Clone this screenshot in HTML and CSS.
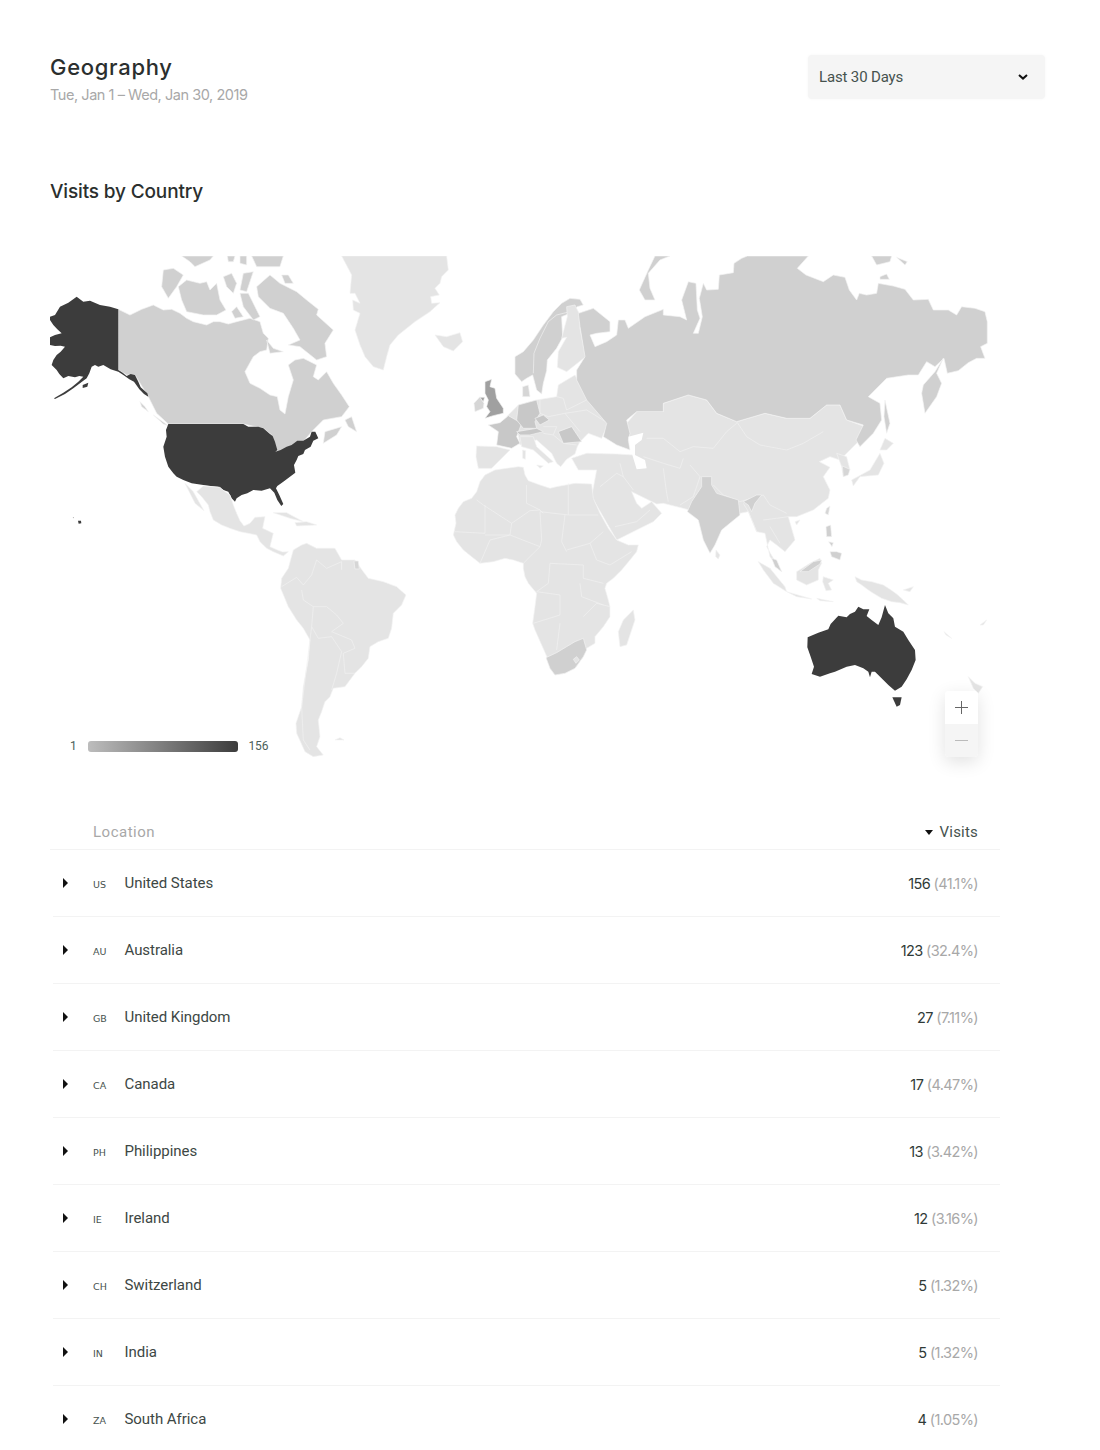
FILE: index.html
```html
<!DOCTYPE html>
<html lang="en">
<head>
    <meta charset="UTF-8">
    <meta name="viewport" content="width=device-width, initial-scale=1.0">
    <title>Geography</title>
    <link rel="stylesheet" href="styles.css">
</head>
<body>

<div class="page">
    <div class="page-head">
        <div>
            <h1>Geography</h1>
            <p class="date-range">Tue, Jan 1 – Wed, Jan 30, 2019</p>
        </div>
        <div class="range-select">
            <span>Last 30 Days</span>
            <svg class="chevron" width="10" height="6" viewBox="0 0 10 6"><path d="M1 1l4 3.6L9 1"/></svg>
        </div>
    </div>

    <h2>Visits by Country</h2>

    <div class="map">
        <svg class="world" width="950" height="504" viewBox="50 256 950 504">
            <!-- north america -->
            <g transform="translate(40 250) scale(.3333)">
                <polygon class="ca" points="235,178 270,195 305,178 340,165 370,180 395,178 420,190 440,205 460,215 500,225 520,215 540,215 565,222 590,215 630,205 660,215 670,250 685,265 680,300 660,305 640,320 615,365 630,400 660,415 690,435 712,440 720,480 735,492 745,440 760,390 745,345 765,330 790,325 830,345 820,380 835,390 860,365 880,400 905,435 928,470 905,500 850,510 815,545 790,575 740,600 705,605 695,555 670,535 610,522 385,522 350,490 325,440 285,375 260,375 235,360"/>
                <polygon class="ca" points="650,110 690,75 720,100 770,125 800,150 835,178 830,195 880,240 855,280 860,320 830,330 780,290 745,285 780,270 760,235 730,190 690,175 655,140"/>
                <polygon class="ca" points="370,60 400,55 430,75 410,110 385,145 365,110"/>
                <polygon class="ca" points="415,110 440,90 480,100 500,95 510,120 530,100 540,150 558,180 530,195 490,195 440,185 425,150"/>
                <polygon class="ca" points="425,18 520,18 510,30 465,50 450,35"/>
                <polygon class="ca" points="562,18 585,18 580,35 565,35"/>
                <polygon class="ca" points="600,18 620,18 620,45 600,40"/>
                <polygon class="ca" points="635,18 730,18 720,50 650,50"/>
                <polygon class="ca" points="550,80 575,70 590,100 580,130 560,110"/>
                <polygon class="ca" points="610,70 640,65 620,125 600,120"/>
                <polygon class="ca" points="725,75 745,75 760,100 735,100"/>
                <polygon class="ca" points="600,130 625,130 660,200 640,210 610,170"/>
                <polygon class="ca" points="575,185 590,170 610,200 585,205"/>
                <polygon class="ca" points="680,270 700,295 730,305 690,310"/>
                <polygon class="ca" points="855,545 905,530 890,555 850,580"/>
                <polygon class="ca" points="915,510 935,500 950,545 925,530"/>
                <polygon class="ca" points="340,495 385,527 370,522"/>
                <polygon class="ca" points="300,455 315,470 325,485 305,470"/>
                <polygon class="dark" points="30,200 45,195 60,170 85,158 110,140 130,155 150,152 180,165 210,170 235,178 235,360 248,368 260,378 272,372 285,375 295,395 302,412 322,430 325,440 312,432 298,418 282,395 268,388 250,375 235,365 212,358 190,345 175,350 165,345 155,350 148,370 140,385 120,400 100,415 75,432 45,447 42,445 70,428 95,412 115,395 130,380 118,378 105,382 85,378 70,385 58,372 50,360 35,345 40,330 50,315 62,305 75,290 62,287 45,288 30,285 30,262 45,255 65,250 52,238 40,225 30,210"/>
                <polygon class="dark" points="128,405 145,398 142,410 128,414"/>
                <polygon class="dark" points="385,522 610,522 625,530 655,530 670,535 690,552 698,558 705,575 712,600 706,605 722,600 740,590 755,585 772,572 790,572 810,560 815,545 826,545 835,565 820,572 812,590 795,600 790,612 775,618 770,630 762,645 766,668 750,680 730,695 712,708 708,715 718,735 730,762 724,768 712,750 703,728 690,715 665,722 640,720 622,730 605,735 590,745 585,755 575,745 565,725 550,720 535,710 512,708 490,705 455,700 430,690 410,680 400,670 385,650 375,620 370,590 380,560 378,540"/>
                <polygon class="dark" points="114,812 123,812 124,820 116,821"/>
                <polygon class="dark" points="98,802 102,803 101,805"/>
            </g>

            <!-- south and central america -->
            <g transform="translate(40 500) scale(.3333)">
                <polygon class="light" points="490,-42 515,-40 540,-38 555,-25 570,-15 580,15 590,40 600,62 612,78 630,70 645,52 675,50 668,85 700,100 695,120 690,140 712,150 728,156 745,155 730,168 700,155 680,145 660,125 650,105 625,100 600,95 570,85 545,75 520,60 510,35 505,15 485,-10 470,-25"/>
                <polygon class="light" points="435,-50 460,-25 492,32 465,10 445,-30"/>
                <polygon class="light" points="700,38 740,38 790,65 750,55"/>
                <polygon class="light" points="765,68 800,65 830,75 770,78"/>
                <polygon class="light" points="725,235 745,205 760,150 785,135 800,130 830,145 885,145 905,180 945,180 970,215 985,235 1030,245 1070,260 1098,285 1085,315 1060,340 1055,385 1045,415 1015,425 990,440 985,475 965,500 945,520 915,560 880,565 870,590 855,605 845,635 835,660 840,710 830,740 850,765 820,770 795,755 770,700 768,670 785,620 790,560 805,480 810,420 790,385 770,360 745,320 722,265"/>
                <polygon class="tint" points="942,183 955,183 958,207 945,207"/>
                <polygon class="light" points="885,720 900,713 912,720"/>
                <polyline class="line" points="725,260 770,232 790,255 815,225 830,180 860,205 905,185 905,210"/>
                <polyline class="line" points="785,270 790,300 820,320 860,320 890,345 910,370 875,395 935,420 945,445 910,460 915,520 945,520"/>
                <polyline class="line" points="820,320 815,380 835,415 875,410 905,455 890,520 875,570"/>
                <polyline class="line" points="815,380 800,500 785,620 790,720 810,750"/>
            </g>

            <!-- greenland, europe -->
            <g transform="translate(340 250) scale(.3333)">
                <polygon class="light" points="5,18 320,18 325,60 305,80 300,100 285,115 298,135 272,140 275,160 300,158 270,185 225,215 175,255 150,285 140,320 130,360 100,350 75,320 60,285 45,240 60,190 40,180 38,150 60,160 45,130 30,130 35,75"/>
                <polygon class="light" points="285,255 320,260 360,248 368,275 340,303 310,290"/>
                <polygon class="ca" points="925,60 945,18 990,18 960,30 925,70 930,115 945,150 915,150 898,120"/>
                <polygon class="light" points="500,500 535,465 590,450 650,440 655,405 705,375 745,450 805,520 785,565 745,550 720,575 712,590 705,612 680,628 662,650 650,640 635,610 590,570 540,585 535,555"/>
                <polygon class="ca" points="525,320 550,305 580,270 610,225 640,185 665,160 690,145 720,148 730,165 712,170 690,190 665,200 668,262 650,295 622,330 620,362 610,400 605,432 590,420 578,375 560,385 545,395 525,372"/>
                <polyline class="line" points="580,370 582,310 600,265 625,215 650,195 690,185"/>
                <polygon class="light" points="665,265 682,200 680,170 705,165 720,195 720,235 737,320 680,365 652,352 655,305 680,262"/>
                <polygon class="tint" points="548,410 565,405 570,440 548,440"/>
                <polyline class="line" points="650,440 670,445 680,480 740,450"/>
                <polyline class="line" points="600,450 600,490 625,500 675,490 720,545"/>
                <polyline class="line" points="675,490 740,480 805,520"/>
                <polyline class="line" points="610,530 650,530 640,555 610,550"/>
                <polyline class="line" points="640,555 670,580 710,585"/>
                <polygon class="light" points="540,560 580,560 590,590 640,635 625,640 580,600 545,590"/>
                <polygon class="light" points="410,588 470,590 510,600 480,630 455,655 415,655 408,620"/>
                <polygon class="light" points="590,645 610,648 600,655"/>
                <polygon class="light" points="548,600 557,602 556,628 548,625"/>
                <polygon class="mid" points="445,525 480,518 505,497 545,520 530,560 540,580 515,595 470,585 475,545"/>
                <polygon class="mid" points="535,465 590,450 600,490 585,515 590,535 550,535 530,510"/>
                <polygon class="mid" points="585,505 610,495 628,510 600,525"/>
                <polygon class="mid" points="530,545 590,535 610,545 570,555 540,555"/>
                <polygon class="mid" points="655,545 695,530 725,575 670,580"/>
                <polygon class="tint" points="402,460 420,440 432,460 430,475 405,485"/>
                <polygon class="uk" points="435,395 455,388 450,410 465,415 470,445 490,475 490,490 460,497 435,505 450,485 440,470 445,450 435,430"/>
                <polygon class="uk" points="420,442 434,442 430,456"/>
            </g>

            <!-- asia -->
            <g transform="translate(600 380) scale(.3333)">
                <polygon class="light" points="80,130 110,95 190,95 190,70 265,45 320,60 350,100 410,125 495,100 560,115 630,115 680,75 720,75 740,120 795,140 780,180 750,210 720,240 690,230 658,245 690,262 670,290 690,330 685,355 640,390 590,410 565,410 585,480 555,515 530,495 510,480 500,500 520,535 545,575 510,530 495,460 470,455 445,395 420,400 300,400 250,385 190,370 170,372 95,335 110,370 125,385 155,365 185,400 160,425 120,445 50,480 -25,350 -10,270 -20,270 -65,270 -85,235 -40,220 50,222 100,225 85,170"/>
                <polyline class="line" points="410,125 440,170 480,195 560,210 610,190 670,155"/>
                <polyline class="line" points="140,175 190,175 240,215 280,200 340,205 380,155 410,130"/>
                <polyline class="line" points="130,230 190,250 240,265 250,235"/>
                <polyline class="line" points="190,265 200,340 205,365"/>
                <polyline class="line" points="270,255 300,290 280,350 240,375"/>
                <polyline class="line" points="60,250 70,290 100,330"/>
                <polyline class="line" points="0,320 50,280 70,290"/>
                <polyline class="line" points="45,440 110,425 150,390"/>
                <polyline class="line" points="430,370 445,395 470,455"/>
                <polyline class="line" points="490,420 530,415 565,410"/>
                <polyline class="line" points="510,440 540,490"/>
                <polyline class="line" points="340,315 370,345 420,365 490,345 510,375 560,400"/>
                <polygon class="ca" points="190,-212 190,-195 240,-190 260,-180 245,-240 265,-295 288,-290 292,-210 300,-185 280,-140 295,-140 307,-190 298,-245 310,-290 320,-270 355,-272 358,-315 400,-322 402,-350 425,-365 442,-372 625,-372 592,-335 618,-315 670,-295 700,-315 735,-308 748,-270 770,-240 778,-260 800,-255 830,-260 835,-290 880,-282 915,-272 940,-240 985,-242 1000,-210 1045,-210 1070,-195 1085,-220 1125,-215 1155,-205 1162,-175 1162,-110 1142,-100 1155,-65 1130,-65 1105,-52 1075,-28 1042,-20 1032,-65 1005,-40 980,-55 955,-15 925,-15 860,-5 805,50 840,70 845,120 820,160 780,200 768,180 790,135 740,120 720,75 680,75 630,115 560,115 495,100 410,125 350,100 320,60 265,45 190,70 190,95 110,95 80,120 90,160 85,180 90,210 50,195 10,170 20,130 -40,60 -70,0 -70,-30 -45,-70 -60,-160 -65,-200 -20,-215 30,-175 30,-145 -10,-140 -30,-135 -15,-100 20,-115 50,-135 55,-180 75,-180 85,-155 135,-190"/>
                <polygon class="ca" points="1030,-65 1010,-20 1025,10 1010,50 975,100 965,40 970,15 1005,-25"/>
                <polygon class="ca" points="815,-372 875,-372 870,-355 830,-345"/>
                <polygon class="ca" points="890,-368 922,-355 915,-345"/>
                <polygon class="ca" points="840,-310 860,-318 868,-302 840,-302"/>
                <polygon class="ca" points="855,60 870,130 860,160 852,110"/>
                <polygon class="blank" points="85,170 130,158 125,180 105,195 105,225 135,240 140,265 110,268 100,235 90,200"/>
                <polygon class="light" points="840,210 855,175 880,190 860,210"/>
                <polygon class="light" points="840,220 852,250 835,285 780,290 760,318 755,300 810,270"/>
                <polygon class="light" points="710,220 740,230 750,270 730,290 725,260"/>
                <polygon class="tint" points="727,258 750,268 745,285 730,290"/>
                <polygon class="ca" points="305,290 335,290 335,315 350,340 415,360 420,405 365,450 345,495 330,520 310,480 295,420 262,395 275,365 305,320"/>
                <polygon class="ca" points="430,365 470,345 485,345 465,370 455,395 445,375"/>
                <polygon class="light" points="348,510 360,525 355,537 347,530"/>
                <polygon class="tint" points="680,385 690,378 685,405 675,400"/>
                <polygon class="light" points="585,425 600,420 590,435"/>
                <polygon class="ca" points="515,535 530,540 545,575 525,560"/>
                <polygon class="light" points="475,545 510,565 555,620 560,635 520,610 490,570"/>
                <polygon class="light" points="590,575 630,550 660,535 665,550 655,570 655,600 620,615 590,600"/>
                <polygon class="ca" points="600,575 640,545 665,540 660,552 625,575"/>
                <polygon class="ca" points="678,440 692,435 695,470 680,470"/>
                <polygon class="ca" points="690,515 710,515 725,520 720,540 695,530"/>
                <polygon class="ca" points="686,485 700,488 696,500"/>
                <polygon class="light" points="670,590 700,600 685,610 695,630 678,632 668,605"/>
            </g>

            <!-- africa -->
            <g transform="translate(440 460) scale(.3333)">
                <polygon class="light" points="45,165 55,145 70,125 95,115 110,95 120,65 135,45 165,30 200,25 235,20 250,22 255,45 265,62 300,75 330,85 350,80 405,70 455,72 460,115 480,160 505,205 530,240 565,255 595,255 590,275 570,300 545,330 520,355 500,370 495,385 505,420 510,440 510,470 490,500 465,530 465,550 440,565 430,590 405,625 375,640 345,645 330,625 325,600 305,555 285,510 278,490 285,440 290,400 265,370 255,350 250,325 250,310 220,300 195,295 160,305 120,310 95,290 70,270 50,245 40,225 48,190"/>
                <polygon class="light" points="580,450 585,480 560,555 540,560 535,515 550,480"/>
                <polyline class="line" points="110,120 130,135 215,190 270,152 300,150 310,160"/>
                <polyline class="line" points="260,75 260,130 300,150"/>
                <polyline class="line" points="385,70 385,165 300,155"/>
                <polyline class="line" points="385,165 475,165"/>
                <polyline class="line" points="375,165 365,245 380,275"/>
                <polyline class="line" points="300,155 305,240 300,260 250,310"/>
                <polyline class="line" points="135,135 135,220 45,215"/>
                <polyline class="line" points="215,190 210,225 135,225"/>
                <polyline class="line" points="120,310 150,240 210,225 300,260"/>
                <polyline class="line" points="380,270 450,250 490,215"/>
                <polyline class="line" points="450,250 470,300 510,315 575,275"/>
                <polyline class="line" points="330,310 430,315 430,355 490,370"/>
                <polyline class="line" points="330,310 325,370 290,395 360,405 360,465 280,490"/>
                <polyline class="line" points="360,490 350,570"/>
                <polyline class="line" points="430,470 470,430 510,440"/>
                <polyline class="line" points="420,370 425,410 490,435"/>
                <polygon class="ca" points="318,593 350,578 405,545 430,535 440,570 430,590 405,625 375,640 345,645 330,625"/>
                <polygon class="light" points="400,598 410,590 418,600 408,610"/>
            </g>

            <!-- oceania -->
            <g transform="translate(740 530) scale(.3333)">
                <polygon class="light" points="345,140 365,150 395,155 430,165 450,178 470,192 490,210 505,225 480,218 455,215 425,205 400,190 385,180 365,165 350,155"/>
                <polygon class="light" points="490,180 520,170 510,185"/>
                <polygon class="light" points="612,305 635,325 618,315"/>
                <polygon class="light" points="720,285 740,270 730,285"/>
                <polygon class="light" points="140,185 215,207 170,200"/>
                <polygon class="light" points="230,205 280,215 240,212"/>
                <polygon class="light" points="685,440 705,460 728,470 715,490 700,475"/>
                <polygon class="dark" points="203,322 235,308 265,298 272,282 295,257 320,262 330,252 345,245 355,230 370,238 388,238 380,258 395,270 415,285 425,262 435,225 445,250 460,265 465,290 490,305 505,330 525,360 527,390 515,420 500,448 485,470 465,482 445,465 430,450 405,425 395,425 390,442 385,425 370,415 345,405 320,410 285,425 270,430 240,440 215,432 222,410 212,380 202,352"/>
                <polygon class="dark" points="457,502 485,502 480,525 470,530"/>
            </g>
        </svg>

        <div class="legend">
            <span>1</span>
            <div class="legend-bar"></div>
            <span>156</span>
        </div>

        <div class="zoom-control">
            <div class="zoom-in">
                <svg width="13" height="13" viewBox="0 0 13 13"><path d="M6.5 0v13M0 6.5h13"/></svg>
            </div>
            <div class="zoom-out">
                <svg width="13" height="1" viewBox="0 0 13 1"><path d="M0 .5h13"/></svg>
            </div>
        </div>
    </div>

    <div class="table">
        <div class="table-head">
            <span class="col-location">Location</span>
            <span class="col-visits"><i class="sort-arrow"></i>Visits</span>
        </div>
        <div class="row">
            <i class="expand"></i><span class="code">US</span><span class="name">United States</span>
            <span class="count">156 <em>(41.1%)</em></span>
        </div>
        <div class="row">
            <i class="expand"></i><span class="code">AU</span><span class="name">Australia</span>
            <span class="count">123 <em>(32.4%)</em></span>
        </div>
        <div class="row">
            <i class="expand"></i><span class="code">GB</span><span class="name">United Kingdom</span>
            <span class="count">27 <em>(7.11%)</em></span>
        </div>
        <div class="row">
            <i class="expand"></i><span class="code">CA</span><span class="name">Canada</span>
            <span class="count">17 <em>(4.47%)</em></span>
        </div>
        <div class="row">
            <i class="expand"></i><span class="code">PH</span><span class="name">Philippines</span>
            <span class="count">13 <em>(3.42%)</em></span>
        </div>
        <div class="row">
            <i class="expand"></i><span class="code">IE</span><span class="name">Ireland</span>
            <span class="count">12 <em>(3.16%)</em></span>
        </div>
        <div class="row">
            <i class="expand"></i><span class="code">CH</span><span class="name">Switzerland</span>
            <span class="count">5 <em>(1.32%)</em></span>
        </div>
        <div class="row">
            <i class="expand"></i><span class="code">IN</span><span class="name">India</span>
            <span class="count">5 <em>(1.32%)</em></span>
        </div>
        <div class="row">
            <i class="expand"></i><span class="code">ZA</span><span class="name">South Africa</span>
            <span class="count">4 <em>(1.05%)</em></span>
        </div>
    </div>
</div>

</body>
</html>
```

FILE: styles.css
```css
body {
    margin: 0;
    background-color: #fff;
    color: #2f3a37;
    font-family: Roboto, "Liberation Sans", sans-serif;
}

.page {
    padding: 55px 55px 0 50px;
}

.page-head {
    display: flex;
    justify-content: space-between;
    align-items: flex-start;
}

h1 {
    margin: 0;
    font-family: Inter, sans-serif;
    font-size: 22px;
    font-weight: 500;
    line-height: 25px;
    letter-spacing: 0.7px;
    color: #2b2f2e;
}

.date-range {
    margin: 6px 0 0;
    font-family: Inter, sans-serif;
    font-size: 14.5px;
    line-height: 18px;
    letter-spacing: -0.45px;
    color: #a8a8a8;
}

.range-select {
    display: flex;
    justify-content: space-between;
    align-items: center;
    box-sizing: border-box;
    width: 237px;
    height: 44px;
    padding: 0 17px 0 11px;
    border-radius: 4px;
    background-color: #f5f5f5;
    box-shadow: 0 0 3px rgba(0, 0, 0, 0.04);
    font-size: 15px;
    letter-spacing: -0.15px;
    color: #46524e;
}

.chevron path {
    fill: none;
    stroke: #111;
    stroke-width: 2;
}

h2 {
    margin: 75px 0 0;
    font-family: Inter, sans-serif;
    font-size: 19px;
    font-weight: 500;
    line-height: 26px;
    letter-spacing: -0.15px;
    color: #2b2f2e;
}

.map {
    position: relative;
    width: 950px;
    height: 504px;
    margin-top: 51px;
}

.world {
    display: block;
    filter: blur(0.35px);
}

.world polygon {
    stroke: #f3f3f3;
    stroke-width: 2;
    stroke-linejoin: round;
}

.world .light { fill: #e4e4e4; }
.world .tint { fill: #d6d6d6; }
.world .ca { fill: #d0d0d0; }
.world .mid { fill: #c8c8c8; }
.world .uk { fill: #a0a0a0; }
.world .dark { fill: #3c3c3c; stroke: none; }
.world .blank { fill: #fff; stroke: none; }

.world .line {
    fill: none;
    stroke: #f1f1f1;
    stroke-width: 2;
}

.legend {
    position: absolute;
    left: 20px;
    top: 483px;
    display: flex;
    align-items: center;
    gap: 11px;
    font-size: 12px;
    line-height: 14px;
    letter-spacing: -0.2px;
    color: #4c5f5a;
}

.legend-bar {
    width: 150px;
    height: 11px;
    border-radius: 3px;
    background: linear-gradient(to right, #bdbdbd, #3c3c3c);
}

.zoom-control {
    position: absolute;
    left: 895px;
    top: 435px;
    width: 33px;
    border-radius: 4px;
    overflow: hidden;
    box-shadow: 0 5px 18px rgba(0, 0, 0, 0.12);
}

.zoom-in,
.zoom-out {
    display: flex;
    align-items: center;
    justify-content: center;
    height: 33px;
}

.zoom-in {
    background-color: #fff;
}

.zoom-out {
    background-color: #f5f5f5;
}

.zoom-control path {
    stroke-width: 1;
    fill: none;
}

.zoom-in path { stroke: #666; }
.zoom-out path { stroke: #bbb; }

.table {
    width: 950px;
    margin-top: 55px;
}

.table-head {
    display: flex;
    justify-content: space-between;
    align-items: center;
    height: 34px;
    padding: 0 22px 0 43px;
    border-bottom: 1px solid #f3f3f3;
    font-size: 15px;
    letter-spacing: 0.5px;
}

.col-location {
    color: #a8a8a8;
}

.col-visits {
    display: flex;
    align-items: center;
    letter-spacing: 0.2px;
    color: #46524e;
}

.sort-arrow {
    width: 0;
    height: 0;
    margin-right: 7px;
    border-left: 4.5px solid transparent;
    border-right: 4.5px solid transparent;
    border-top: 5px solid #111;
}

.row {
    display: flex;
    align-items: center;
    height: 66px;
    margin-left: 3px;
    padding-right: 22px;
    border-bottom: 1px solid #f3f3f3;
    font-size: 15px;
}

.row:last-child {
    border-bottom: none;
}

.expand {
    width: 0;
    height: 0;
    margin-left: 10px;
    margin-right: 25px;
    border-top: 5px solid transparent;
    border-bottom: 5px solid transparent;
    border-left: 5px solid #111;
}

.code {
    width: 31.5px;
    padding-top: 3px;
    font-family: "DejaVu Sans", sans-serif;
    font-size: 9.5px;
    color: #46524e;
}

.name {
    flex: 1;
    letter-spacing: -0.05px;
    color: #3d4744;
}

.count {
    font-family: Inter, sans-serif;
    font-size: 14.5px;
    letter-spacing: -0.6px;
    color: #2f3a37;
}

.count em {
    font-style: normal;
    color: #a8a8a8;
}
```
